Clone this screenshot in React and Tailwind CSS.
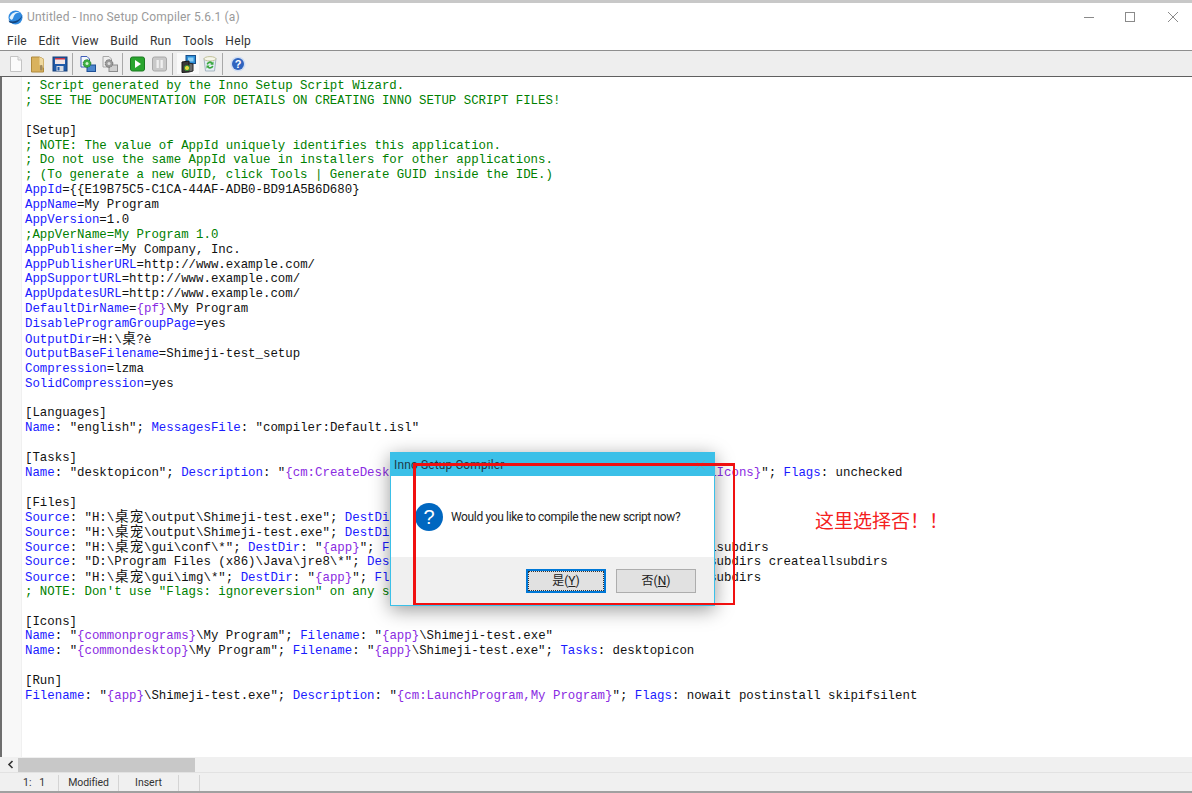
import React from "react";

const C = { k: "text-[#1a1aff]", b: "text-[#111111]", p: "text-[#8a2be2]", g: "text-[#008000]" };

function Cjk({ children }) {
  return (
    <span className="inline-block w-[14.88px] text-center text-[13.5px] leading-[10px] font-['Noto_Sans_CJK_SC',sans-serif]">
      {children}
    </span>
  );
}

function Seg({ t, s }) {
  const parts = [];
  let buf = "";
  [...s].forEach((ch, i) => {
    if (ch.charCodeAt(0) > 0x2e80) {
      if (buf) parts.push(buf);
      buf = "";
      parts.push(<Cjk key={i}>{ch}</Cjk>);
    } else buf += ch;
  });
  if (buf) parts.push(buf);
  return <span className={C[t]}>{parts}</span>;
}

const kv = (k, v) => [["k", k], ["b", "=" + v]];
const str = (v) => ["b", `"${v}"`];
const semi = ["b", "; "];
const key = (k) => [["k", k], ["b", ": "]];

const LINES = [
  [["g", "; Script generated by the Inno Setup Script Wizard."]],
  [["g", "; SEE THE DOCUMENTATION FOR DETAILS ON CREATING INNO SETUP SCRIPT FILES!"]],
  [],
  [["b", "[Setup]"]],
  [["g", "; NOTE: The value of AppId uniquely identifies this application."]],
  [["g", "; Do not use the same AppId value in installers for other applications."]],
  [["g", "; (To generate a new GUID, click Tools | Generate GUID inside the IDE.)"]],
  kv("AppId", "{{E19B75C5-C1CA-44AF-ADB0-BD91A5B6D680}"),
  kv("AppName", "My Program"),
  kv("AppVersion", "1.0"),
  [["g", ";AppVerName=My Program 1.0"]],
  kv("AppPublisher", "My Company, Inc."),
  kv("AppPublisherURL", "http://www.example.com/"),
  kv("AppSupportURL", "http://www.example.com/"),
  kv("AppUpdatesURL", "http://www.example.com/"),
  [["k", "DefaultDirName"], ["b", "="], ["p", "{pf}"], ["b", "\\My Program"]],
  kv("DisableProgramGroupPage", "yes"),
  kv("OutputDir", "H:\\桌?è"),
  kv("OutputBaseFilename", "Shimeji-test_setup"),
  kv("Compression", "lzma"),
  kv("SolidCompression", "yes"),
  [],
  [["b", "[Languages]"]],
  [...key("Name"), str("english"), semi, ...key("MessagesFile"), str("compiler:Default.isl")],
  [],
  [["b", "[Tasks]"]],
  [...key("Name"), str("desktopicon"), semi, ...key("Description"), ["b", '"'], ["p", "{cm:CreateDesktopIcon}"], ["b", '"; '], ...key("GroupDescription"), ["b", '"'], ["p", "{cm:AdditionalIcons}"], ["b", '"; '], ...key("Flags"), ["b", "unchecked"]],
  [],
  [["b", "[Files]"]],
  [...key("Source"), str("H:\\桌宠\\output\\Shimeji-test.exe"), semi, ...key("DestDir"), ["b", '"'], ["p", "{app}"], ["b", '"; '], ...key("Flags"), ["b", "ignoreversion"]],
  [...key("Source"), str("H:\\桌宠\\output\\Shimeji-test.exe"), semi, ...key("DestDir"), ["b", '"'], ["p", "{app}"], ["b", '"; '], ...key("Flags"), ["b", "ignoreversion"]],
  [...key("Source"), str("H:\\桌宠\\gui\\conf\\*"), semi, ...key("DestDir"), ["b", '"'], ["p", "{app}"], ["b", '"; '], ...key("Flags"), ["b", "ignoreversion recursesubdirs createallsubdirs"]],
  [...key("Source"), str("D:\\Program Files (x86)\\Java\\jre8\\*"), semi, ...key("DestDir"), ["b", '"'], ["p", "{app}"], ["b", '"; '], ...key("Flags"), ["b", "ignoreversion recursesubdirs createallsubdirs"]],
  [...key("Source"), str("H:\\桌宠\\gui\\img\\*"), semi, ...key("DestDir"), ["b", '"'], ["p", "{app}"], ["b", '"; '], ...key("Flags"), ["b", "ignoreversion recursesubdirs createallsubdirs"]],
  [["g", "; NOTE: Don't use \"Flags: ignoreversion\" on any shared system files"]],
  [],
  [["b", "[Icons]"]],
  [...key("Name"), ["b", '"'], ["p", "{commonprograms}"], ["b", '\\My Program"; '], ...key("Filename"), ["b", '"'], ["p", "{app}"], ["b", '\\Shimeji-test.exe"']],
  [...key("Name"), ["b", '"'], ["p", "{commondesktop}"], ["b", '\\My Program"; '], ...key("Filename"), ["b", '"'], ["p", "{app}"], ["b", '\\Shimeji-test.exe"; '], ...key("Tasks"), ["b", "desktopicon"]],
  [],
  [["b", "[Run]"]],
  [...key("Filename"), ["b", '"'], ["p", "{app}"], ["b", '\\Shimeji-test.exe"; '], ...key("Description"), ["b", '"'], ["p", "{cm:LaunchProgram,My Program}"], ["b", '"; '], ...key("Flags"), ["b", "nowait postinstall skipifsilent"]],
];

const Ico = ({ children }) => (
  <svg width="18" height="18" viewBox="0 0 18 18" fill="none">{children}</svg>
);

const NewDoc = () => (
  <Ico>
    <path d="M3.5 1.5h7.5l3.5 3.5v11.5h-11z" fill="#fbfbfb" stroke="#c4c4c4" />
    <path d="M11 1.5v3.5h3.5" fill="#eeeeee" stroke="#c4c4c4" />
  </Ico>
);
const Folder = () => (
  <Ico>
    <path d="M2.5 2h8l4 2v13h-12z" fill="#d9b25e" stroke="#b08a3c" />
    <path d="M10.5 2v8l4 3V4z" fill="#efd9a0" />
    <rect x="11" y="10" width="2.5" height="5.5" rx="1" fill="#a08a60" />
  </Ico>
);
const Save = () => (
  <Ico>
    <rect x="2" y="2" width="14" height="14" fill="#1f5aa8" stroke="#173f78" />
    <rect x="4" y="3" width="10" height="6" fill="#f2e6e6" />
    <rect x="4" y="3" width="10" height="1.5" fill="#c8384a" />
    <rect x="5.5" y="11" width="7" height="5" fill="#d8dce4" />
    <rect x="6.5" y="12" width="2" height="3.5" fill="#1f5aa8" />
  </Ico>
);
const Compile = ({ grey }) => (
  <Ico>
    <path d="M2 1.5h6l2.5 2.5v8H2z" fill={grey ? "#eeeeee" : "#f4f7ff"} stroke={grey ? "#a8a8a8" : "#3f5fb8"} />
    <rect x="8" y="10" width="8.5" height="6.5" fill={grey ? "#cfcfcf" : "#4d87cc"} stroke={grey ? "#8c8c8c" : "#1e4f96"} />
    <circle cx="8" cy="8.5" r="3.8" fill={grey ? "#9a9a9a" : "#3cb043"} stroke={grey ? "#707070" : "#1f7a28"} strokeDasharray="1.6 0.8" />
    <circle cx="8" cy="8.5" r="1.5" fill={grey ? "#dedede" : "#d5f2d0"} />
  </Ico>
);
const Run = () => (
  <Ico>
    <rect x="1.5" y="2" width="14" height="14" rx="2" fill="#2aa52f" stroke="#1b7a20" />
    <path d="M6 5l6 4-6 4z" fill="#ffffff" />
  </Ico>
);
const Pause = () => (
  <Ico>
    <rect x="1.5" y="2" width="14" height="14" rx="2" fill="#c9c9c9" stroke="#a8a8a8" />
    <rect x="5.5" y="5" width="2.3" height="8" fill="#f0f0f0" />
    <rect x="9.5" y="5" width="2.3" height="8" fill="#f0f0f0" />
  </Ico>
);
const Setup = () => (
  <Ico>
    <rect x="7" y="0.5" width="9.5" height="8" fill="#2c8fd8" stroke="#1a4f8a" />
    <rect x="9" y="2.5" width="5.5" height="4" fill="#8fd0f5" />
    <path d="M3 7l7-1v11l-7 .5z" fill="#3a3a3a" stroke="#161616" />
    <path d="M10 8l4 1v7l-4 1z" fill="#6e6e6e" stroke="#262626" />
    <circle cx="8" cy="13" r="2.6" fill="#e8d840" stroke="#2f8f38" />
  </Ico>
);
const Recompile = () => (
  <Ico>
    <path d="M3 3.5h12l-1.5 12.5H4.5z" fill="#e4edf4" stroke="#a5b5c0" />
    <ellipse cx="9" cy="3.8" rx="6" ry="2.2" fill="#f6f6ea" stroke="#c2c29a" />
    <path d="M5.5 9a3.5 3.5 0 0 1 6-1.5l1-1v3.2H9.3l1-1A2 2 0 0 0 7 9.8z" fill="#3aa83f" />
    <path d="M12.5 11a3.5 3.5 0 0 1-6 1.5l-1 1v-3h3.2l-1 1a2 2 0 0 0 3.3-.8z" fill="#3aa83f" />
  </Ico>
);
const Help = () => (
  <svg width="18" height="18" viewBox="0 0 18 18">
    <circle cx="9" cy="9" r="7.5" fill="#d0ddf2" />
    <circle cx="9" cy="9" r="6" fill="#2f64bf" />
    <text x="9" y="12.8" textAnchor="middle" fontSize="11" fontWeight="700" fill="#ffffff" fontFamily="'Liberation Sans',sans-serif">?</text>
  </svg>
);

const Btn = ({ children, on }) => (
  <div className={`flex h-[21px] w-[22px] items-center justify-center ${on ? "bg-[#fafafa]" : ""}`}>{children}</div>
);
const Sep = () => (
  <div className="flex h-[22px] w-[6px] justify-start pl-[1px]">
    <div className="h-full w-px bg-[#a8a8a8]" />
  </div>
);

export default function App() {
  return (
    <div className="relative flex h-[793px] w-[1192px] flex-col overflow-hidden bg-white font-['Roboto','Noto_Sans_CJK_SC',sans-serif] text-[12px] text-[#222]">
      <div className="h-[3px] shrink-0 bg-[#c8c8c8]" />
      {/* title bar */}
      <div className="flex h-[27px] shrink-0 items-center pl-[7px] pt-[1px]">
        <svg width="17" height="17" viewBox="0 0 17 17">
          <circle cx="8.5" cy="8.5" r="7" fill="#2f8ae0" />
          <path d="M2.5 9C4 4 9 1.5 13.5 4c-3-1-6 .5-7 4s-2 3.5-4 1z" fill="#e4f4fd" />
          <path d="M1.5 11.5c4.5 2 10.5 1 14-5.5-1.5 6-7.5 10-13 7.5z" fill="#14457f" />
        </svg>
        <span className="ml-[3px] text-[#9a9a9a] tracking-[0.17px]">Untitled - Inno Setup Compiler 5.6.1 (a)</span>
        <div className="ml-auto flex items-center">
          <div className="mr-[31px] h-px w-[10px] bg-[#8a8a8a]" />
          <div className="mr-[33px] h-[10px] w-[10px] border border-[#8a8a8a]" />
          <svg className="mr-[14px]" width="10" height="10" viewBox="0 0 10 10">
            <path d="M0 0l10 10M10 0L0 10" stroke="#8a8a8a" strokeWidth="1" />
          </svg>
        </div>
      </div>
      {/* menu */}
      <div className="flex h-[20px] shrink-0 items-center gap-[11.5px] pl-[7px] pt-[1px] text-[#333] tracking-[0.3px]">
        {["File", "Edit", "View", "Build", "Run", "Tools", "Help"].map((m) => (
          <span key={m}>{m}</span>
        ))}
      </div>
      {/* toolbar */}
      <div className="flex h-[27px] shrink-0 items-center border-y border-y-[#8e8e8e] border-b-[#5f5f5f] bg-[#eeeeee] pl-[5px]">
        <Btn><NewDoc /></Btn>
        <Btn><Folder /></Btn>
        <Btn><Save /></Btn>
        <Sep />
        <Btn><Compile /></Btn>
        <Btn><Compile grey /></Btn>
        <Sep />
        <Btn><Run /></Btn>
        <Btn><Pause /></Btn>
        <Sep />
        <Btn on><Setup /></Btn>
        <Btn><Recompile /></Btn>
        <Sep />
        <Btn><Help /></Btn>
      </div>
      {/* editor */}
      <div className="flex min-h-0 flex-1 border-l-2 border-l-[#6e6e6e]">
        <div className="w-[20px] shrink-0 border-r border-r-[#f0f0f0] bg-[#f8f8f8]" />
        <div className="min-w-0 flex-1 overflow-hidden whitespace-pre pl-[3px] pt-[2px] font-['Liberation_Mono',monospace] text-[12.4px] leading-[14.875px]">
          {LINES.map((line, i) => (
            <div key={i} className="h-[14.875px]">
              {line.map(([t, s], j) => (
                <Seg key={j} t={t} s={s} />
              ))}
            </div>
          ))}
        </div>
      </div>
      {/* horizontal scrollbar */}
      <div className="flex h-[15px] shrink-0 items-center bg-[#f0f0f0] pl-[2px]">
        <div className="flex h-[15px] w-[16px] items-center justify-center">
          <svg width="7" height="9" viewBox="0 0 7 9">
            <path d="M5.5 1L2 4.5 5.5 8" fill="none" stroke="#333" strokeWidth="1.6" />
          </svg>
        </div>
        <div className="h-[14px] w-[177px] bg-[#c8c8c8]" />
      </div>
      {/* status bar */}
      <div className="flex h-[21px] shrink-0 items-center border-b-2 border-b-[#a0a0a0] border-t border-t-[#e2e2e2] bg-[#f0f0f0] pt-[2px] text-[10.5px] text-[#333]">
        <div className="flex h-full w-[59px] items-center whitespace-pre border-r border-r-[#d4d4d4] pl-[23px]">1:   1</div>
        <div className="flex h-full w-[60px] items-center justify-center border-r border-r-[#d4d4d4] tracking-[-0.1px]">Modified</div>
        <div className="flex h-full w-[60px] items-center justify-center border-r border-r-[#d4d4d4]">Insert</div>
        <div className="h-full w-[21px] border-r border-r-[#d4d4d4]" />
      </div>

      {/* dialog */}
      <div className="absolute left-[390px] top-[452px] flex h-[154px] w-[325px] flex-col border border-[#3bc0e8] bg-white shadow-[0_4px_18px_rgba(0,0,0,0.4)]">
        <div className="flex h-[23px] shrink-0 items-center justify-between bg-[#3bc0e8] pl-[3px] pr-[9px] text-[#1d3a48] tracking-[0.12px]">
          <span>Inno Setup Compiler</span>
          <svg width="10" height="10" viewBox="0 0 10 10">
            <path d="M0 0l10 10M10 0L0 10" stroke="#6aa8bf" strokeWidth="1" />
          </svg>
        </div>
        <div className="flex flex-1 items-center pl-[24px]">
          <svg width="28" height="28" viewBox="0 0 28 28">
            <circle cx="14" cy="14" r="14" fill="#0067c0" />
            <text x="14" y="21" textAnchor="middle" fontSize="20" fill="#ffffff" fontFamily="'Liberation Sans',sans-serif">?</text>
          </svg>
          <span className="ml-[8px] text-[#222] tracking-[-0.35px]">Would you like to compile the new script now?</span>
        </div>
        <div className="flex h-[48px] shrink-0 items-start justify-end gap-[10px] bg-[#f0f0f0] pr-[18px] pt-[12px]">
          <div className="flex h-[24px] w-[80px] items-center justify-center border-2 border-[#0078d7] bg-[#e1e1e1] outline-1 -outline-offset-3 outline-dotted outline-[#333]">
            <span>是(<span className="underline">Y</span>)</span>
          </div>
          <div className="flex h-[24px] w-[80px] items-center justify-center border border-[#adadad] bg-[#e1e1e1]">
            <span>否(<span className="underline">N</span>)</span>
          </div>
        </div>
      </div>
      {/* annotation */}
      <div className="absolute left-[413px] top-[463px] h-[142px] w-[322px] border-t-[3px] border-l-[3px] border-r-2 border-b-2 border-[#f01010]" />
      <div className="absolute left-[815px] top-[507px] font-['Noto_Sans_CJK_SC',sans-serif] text-[19px] leading-[26px] text-[#f42020]">这里选择否！！</div>
    </div>
  );
}
